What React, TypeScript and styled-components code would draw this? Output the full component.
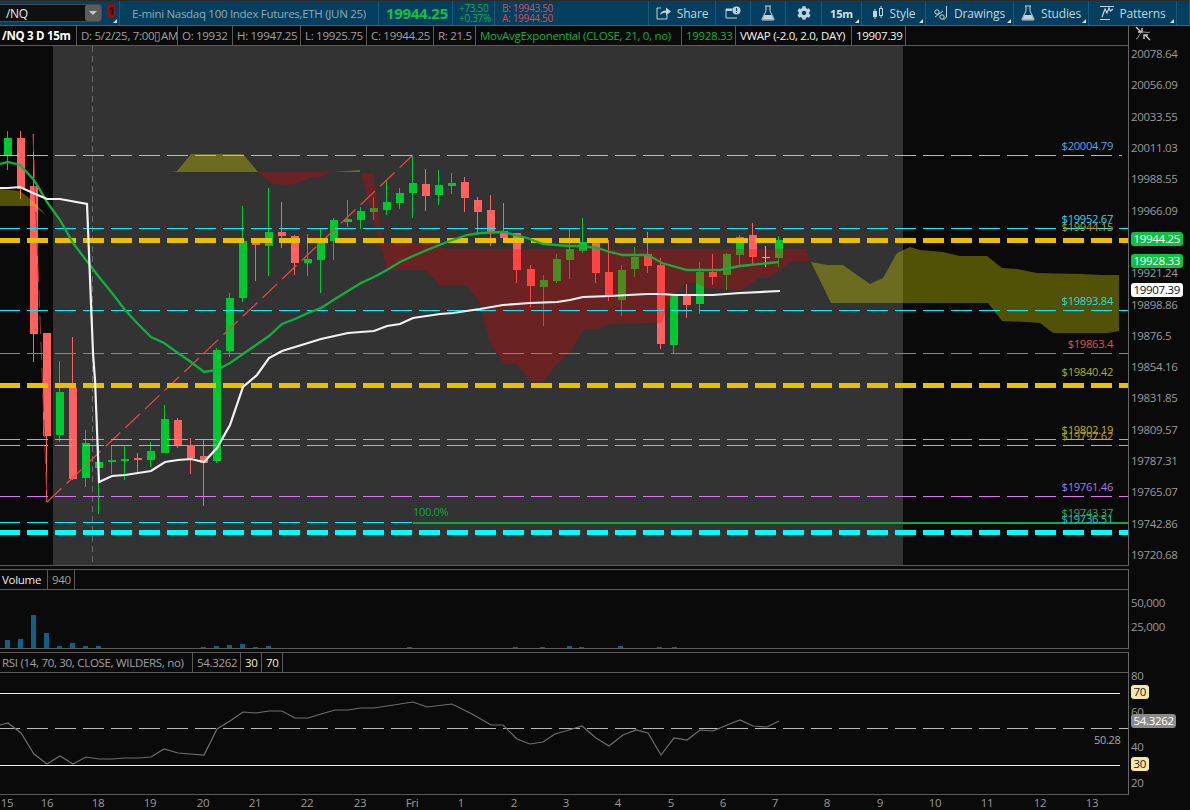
import styled, { createGlobalStyle } from "styled-components";
import { FaCog } from "react-icons/fa";

const GlobalStyle = createGlobalStyle`
  html, body { margin: 0; padding: 0; background: #0a0a0a; }
  body { font-family: "Open Sans", "Noto Sans", sans-serif; font-size: 11px; letter-spacing: -0.3px; overflow: hidden; }
`;

const Page = styled.div`
  width: 1190px;
  height: 810px;
  display: flex;
  flex-direction: column;
  overflow: hidden;
  background: #0a0a0a;
  color: #a0a0a0;
`;

const TopBar = styled.div`
  height: 24px;
  flex: none;
  display: flex;
  align-items: stretch;
  background: #053f5f;
  border-top: 1px solid #2a2a2a;
  border-bottom: 1px solid #5a5a5a;
`;

const Section = styled.div<{ $w?: number; $pad?: number }>`
  position: relative;
  width: ${(p) => (p.$w ? `${p.$w}px` : "auto")};
  flex: ${(p) => (p.$w ? "none" : "1")};
  box-sizing: border-box;
  display: flex;
  align-items: center;
  padding: 0 0 0 ${(p) => p.$pad ?? 7}px;
  border-right: 1px solid #17597c;
  white-space: nowrap;
`;

const SymbolBox = styled.div`
  width: 102px;
  height: 18px;
  margin: 3px 0 0 0;
  box-sizing: border-box;
  background: #101010;
  border: 1px solid #4a4a4a;
  border-left: none;
  border-radius: 0 3px 3px 0;
  display: flex;
  align-items: center;
  justify-content: space-between;
  color: #e8e8e8;
  font-size: 12px;
  padding-left: 6px;
`;

const DropButton = styled.div`
  width: 16px;
  height: 16px;
  background: #5c5c5c;
  border-radius: 2px;
  display: flex;
  align-items: center;
  justify-content: center;
  &::after {
    content: "";
    border-left: 4px solid transparent;
    border-right: 4px solid transparent;
    border-top: 4px solid #c8c8c8;
  }
`;

const AlertBadge = styled.div`
  width: 9px;
  height: 13px;
  margin: 3px 0 0 5px;
  border-radius: 2px;
  background: #8a1414;
  color: #2a0505;
  font-size: 11px;
  font-weight: 700;
  line-height: 13px;
  text-align: center;
`;

const Corner = styled.span`
  position: absolute;
  right: 2px;
  bottom: 2px;
  width: 0;
  height: 0;
  border-left: 4px solid transparent;
  border-bottom: 4px solid #d8e4ea;
`;

const SymbolSection = styled(Section)`
  padding: 0;
  align-items: flex-start;
`;

const Title = styled.span`
  color: #93a9b5;
  font-size: 11.5px;
  padding-left: 5px;
`;

const LastPrice = styled.span`
  color: #10c040;
  font-size: 15px;
  font-weight: 700;
`;

const TwoLines = styled.div<{ $color: string }>`
  display: flex;
  flex-direction: column;
  color: ${(p) => p.$color};
  font-size: 10px;
  line-height: 10px;
`;

const ToolButton = styled(Section)`
  justify-content: center;
  gap: 6px;
  padding: 0;
  color: #c4d3db;
  font-size: 12px;
  letter-spacing: -0.15px;
  svg { flex: none; }
`;

const BoldLabel = styled.span`
  font-weight: 700;
  font-size: 11px;
  color: #d4e0e6;
`;

const PaneRow = styled.div`
  display: flex;
  flex: none;
`;

const PaneMain = styled.div`
  width: 1129px;
  flex: none;
  box-sizing: border-box;
  border-right: 1px solid #666;
  border-bottom: 1px solid #5a5a5a;
`;

const SubPaneMain = styled(PaneMain)`
  border-top: 1px solid #5a5a5a;
`;

const Legend = styled.div`
  height: 19px;
  display: flex;
  border-bottom: 1px solid #5a5a5a;
  font-size: 11.5px;
`;

const LegendCell = styled.div<{ $w: number; $color?: string; $bold?: boolean; $pad?: number }>`
  width: ${(p) => p.$w}px;
  flex: none;
  box-sizing: border-box;
  padding-left: ${(p) => p.$pad ?? 4}px;
  line-height: 19px;
  border-right: 1px solid #5a5a5a;
  white-space: nowrap;
  overflow: hidden;
  color: ${(p) => p.$color || "#a0a0a0"};
  font-weight: ${(p) => (p.$bold ? 700 : 400)};
`;

const Plot = styled.div<{ $h: number }>`
  position: relative;
  height: ${(p) => p.$h}px;
  overflow: hidden;
  svg { display: block; }
`;

const PriceNote = styled.span.attrs<{ $y: number; $color: string }>((p) => ({
  style: { top: p.$y - 54, color: p.$color },
}))<{ $y: number; $color: string }>`
  position: absolute;
  right: 15px;
  line-height: 16px;
  font-size: 11.2px;
`;

const FibNote = styled.span`
  position: absolute;
  left: 413px;
  top: 458px;
  color: #12a544;
  line-height: 16px;
  font-size: 11px;
`;

const Axis = styled.div`
  position: relative;
  flex: 1;
  display: flex;
  flex-direction: column;
  padding-left: 2px;
  line-height: 16px;
  color: #9a9a9a;
  font-size: 11.5px;
`;

const PriceAxis = styled(Axis)`
  height: 540px;
  padding-bottom: 3px;
  box-sizing: border-box;
`;

const AxisIcon = styled.div`
  height: 20px;
  padding-left: 4px;
`;

const PriceScale = styled.div`
  flex: 1;
  display: flex;
  flex-direction: column;
  justify-content: space-between;
`;

const AxisLabel = styled.div`
  height: 16px;
`;

const VolumeScale = styled.div`
  display: flex;
  flex-direction: column;
  gap: 8px;
  padding-top: 26px;
`;

const RsiScale = styled.div`
  height: 123px;
  padding-top: 16px;
  display: flex;
  flex-direction: column;
  justify-content: space-between;
`;

const Badge = styled.div.attrs<{ $y: number; $bg: string; $fg: string }>((p) => ({
  style: { top: p.$y, background: p.$bg, color: p.$fg },
}))<{ $y: number; $bg: string; $fg: string }>`
  position: absolute;
  left: 2px;
  height: 14px;
  padding: 0 2.5px;
  line-height: 14px;
  border-radius: 3px;
  font-size: 11.5px;
`;

const Gap = styled.div`
  height: 3px;
  flex: none;
`;

const TimeAxis = styled.div`
  position: relative;
  height: 15px;
  flex: none;
  line-height: 16px;
  color: #9a9a9a;
  font-size: 11.5px;
`;

const Tick = styled.span.attrs<{ $x: number }>((p) => ({
  style: { left: p.$x },
}))<{ $x: number }>`
  position: absolute;
  top: 0;
  transform: translateX(-50%);
`;

const TinyNote = styled.span`
  position: absolute;
  left: 1094px;
  top: 59px;
  line-height: 16px;
  color: #a8a8a8;
  font-size: 11px;
`;

type Candle = [number, number, number, number, "g" | "r" | "p"];

// body top, body bottom, wick top, wick bottom, colour (pixels on the screen)
const candles: Candle[] = [
  [138, 156, 131, 170, "g"], [138, 189, 131, 199, "r"], [186, 334, 134, 362, "r"], [333, 436, 333, 502, "r"],
  [392, 435, 361, 442, "g"], [388, 479, 337, 480, "r"], [443, 478, 430, 487, "g"], [462, 468, 445, 514, "g"],
  [460, 462, 446, 474, "g"], [459, 461, 446, 480, "g"], [458, 460, 453, 472, "r"], [451, 460, 442, 467, "g"],
  [419, 453, 405, 453, "g"], [420, 445, 418, 448, "r"], [445, 458, 438, 474, "r"], [456, 463, 440, 506, "r"],
  [350, 461, 348, 463, "g"], [298, 351, 293, 357, "g"], [241, 298, 206, 302, "g"], [241, 245, 241, 281, "r"],
  [232, 246, 188, 276, "g"], [232, 236, 202, 248, "r"], [236, 263, 235, 275, "r"], [259, 263, 234, 276, "g"],
  [243, 260, 228, 293, "g"], [220, 241, 218, 260, "g"], [219, 222, 200, 227, "g"], [211, 220, 207, 229, "g"],
  [208, 212, 197, 220, "g"], [202, 210, 180, 215, "g"], [193, 203, 188, 209, "g"], [183, 193, 155, 218, "g"],
  [184, 196, 169, 211, "r"], [185, 195, 170, 205, "g"], [183, 186, 173, 194, "g"], [182, 198, 177, 212, "r"],
  [200, 212, 197, 235, "r"], [210, 232, 195, 246, "r"], [231, 238, 203, 238, "r"], [233, 270, 233, 283, "r"],
  [269, 286, 265, 307, "r"], [280, 287, 275, 326, "g"], [259, 281, 254, 283, "g"], [249, 260, 228, 279, "g"],
  [242, 251, 218, 253, "g"], [243, 273, 243, 283, "r"], [272, 297, 240, 301, "r"], [270, 300, 265, 316, "g"],
  [257, 269, 247, 277, "g"], [254, 266, 232, 273, "r"], [265, 344, 258, 349, "r"], [295, 345, 295, 353, "g"],
  [295, 305, 284, 318, "r"], [272, 304, 262, 314, "g"], [272, 277, 254, 285, "r"], [254, 275, 253, 290, "g"],
  [237, 255, 235, 266, "g"], [235, 257, 223, 266, "r"], [257, 258, 246, 267, "p"], [240, 258, 236, 267, "g"],
];

const candleX = (i: number) => Math.round(7.7 + 13.07 * i);

const pts = (list: number[][]) => list.map((p) => p.join(",")).join(" ");

const redCloud = [
  [361, 173], [373, 173], [383, 243], [430, 243], [447, 249], [806, 249], [810, 261], [792, 261], [768, 278],
  [758, 278], [742, 290], [705, 288], [697, 283], [686, 283], [672, 297], [661, 323], [610, 324], [598, 329],
  [583, 329], [572, 350], [557, 364], [544, 381], [530, 381], [517, 364], [505, 364], [492, 347], [479, 302],
  [466, 285], [439, 285], [426, 270], [387, 270],
];

const smallRedCloud = [[258, 172], [273, 184], [290, 185], [300, 182], [310, 178], [320, 177], [333, 172]];
const topOlive = [[171, 172], [177, 171], [191, 154], [243, 154], [258, 172]];
const sliverOlive = [[334, 172], [347, 171], [360, 170], [360, 172]];
const leftOlive = [[0, 189], [20, 191], [33, 201], [46, 215], [33, 206], [0, 206]];
const rightOlive = [
  [811, 262], [827, 265], [843, 265], [857, 275], [870, 284], [883, 278], [897, 253], [910, 247], [920, 250],
  [943, 252], [960, 256], [987, 256], [1002, 268], [1017, 269], [1037, 273], [1080, 274], [1103, 275], [1119, 275],
  [1119, 331], [1108, 333], [1053, 333], [1040, 323], [1027, 322], [1002, 321], [988, 303], [831, 303],
];

const maLine = [
  [0, 164], [8, 162], [20, 165], [34, 180], [47, 202], [60, 220], [73, 243], [86, 260], [99, 277], [112, 293],
  [125, 310], [138, 324], [151, 337], [164, 343], [178, 353], [191, 362], [204, 372], [217, 370], [230, 363],
  [243, 354], [256, 345], [269, 336], [282, 324], [295, 319], [308, 313], [321, 308], [335, 299], [348, 291],
  [361, 283], [374, 277], [387, 270], [400, 262], [413, 256], [427, 250], [447, 242], [467, 235], [480, 233],
  [503, 232], [527, 238], [543, 244], [570, 246], [583, 246], [597, 248], [610, 252], [623, 255], [648, 255],
  [662, 263], [687, 270], [720, 270], [740, 266], [779, 262],
];

const vwapLine = [
  [0, 188], [8, 188], [20, 187], [33, 193], [47, 199], [60, 199], [87, 204], [93, 353], [95, 380], [97, 430],
  [99, 482], [112, 476], [125, 475], [138, 473], [151, 471], [165, 462], [178, 460], [191, 459], [204, 462],
  [217, 448], [230, 425], [243, 387], [257, 375], [269, 358], [282, 351], [295, 347], [321, 339], [348, 333],
  [361, 332], [374, 331], [387, 326], [400, 324], [413, 318], [440, 314], [453, 313], [480, 309], [503, 305],
  [530, 303], [557, 302], [570, 300], [583, 297], [610, 296], [647, 294], [662, 294], [675, 295], [713, 295],
  [740, 293], [780, 291],
];

const rsiLine = [
  [0, 725], [8, 723], [21, 733], [34, 754], [47, 764], [60, 756], [73, 764], [86, 757], [99, 759], [112, 759],
  [125, 758], [138, 758], [151, 757], [164, 749], [178, 753], [204, 755], [217, 729], [230, 721], [243, 712],
  [256, 713], [269, 711], [282, 711], [295, 718], [308, 718], [321, 714], [335, 710], [348, 710], [361, 708],
  [374, 708], [400, 704], [413, 702], [427, 707], [452, 704], [472, 714], [491, 725], [503, 725], [517, 739],
  [530, 744], [543, 742], [555, 734], [569, 730], [582, 726], [596, 738], [609, 746], [623, 735], [636, 730],
  [648, 733], [661, 755], [674, 738], [687, 740], [700, 730], [713, 731], [727, 725], [740, 720], [753, 726],
  [767, 727], [779, 721],
];

const levels: [number, string, number][] = [
  [155.5, "#7ec8ee", 1], [228.5, "#00f0ff", 1], [240.5, "#e8c000", 5], [310.5, "#00f0ff", 1],
  [353.5, "#e06060", 1], [385.5, "#e8c000", 5], [439.5, "#d8b800", 1], [445.5, "#d8b800", 1],
  [496.5, "#d878f0", 1], [522.5, "#00f0ff", 1], [532.5, "#00ffff", 5],
];

const notes: [string, number, string][] = [
  ["$20004.79", 146, "#58a8e4"], ["$19944.15", 227, "#c09a10"], ["$19952.67", 219, "#20dcf0"],
  ["$19893.84", 301, "#20dcd8"], ["$19863.4", 344, "#e05050"], ["$19840.42", 372, "#b0b010"],
  ["$19797.62", 436, "#c0a010"], ["$19802.19", 430, "#c8a810"], ["$19761.46", 487, "#a878e8"],
  ["$19736.51", 519, "#10c8d8"], ["$19743.37", 513, "#10b860"],
];

const volumes: [number, number][] = [
  [8, 8], [21, 9], [34, 33], [47, 15], [60, 2], [73, 5], [86, 2], [99, 2], [204, 1], [217, 2], [230, 3], [243, 4],
  [256, 1], [269, 2], [410, 1], [516, 1], [543, 1], [570, 2], [582, 1], [621, 2], [660, 1], [675, 1],
];

const priceScale = [
  "20078.64", "20056.09", "20033.55", "20011.03", "19988.55", "19966.09", "", "19921.24", "19898.86", "19876.5",
  "19854.16", "19831.85", "19809.57", "19787.31", "19765.07", "19742.86", "19720.68",
];

const ticks: [string, number][] = [
  ["15", 7], ["16", 47], ["18", 98], ["19", 150], ["20", 203], ["21", 255], ["22", 307], ["23", 360], ["Fri", 412],
  ["1", 461], ["2", 514], ["3", 566], ["4", 618], ["5", 671], ["6", 723], ["7", 775], ["8", 827], ["9", 880],
  ["10", 935], ["11", 987], ["12", 1040], ["13", 1092],
];

const CandleSet = ({ up, down }: { up: string; down: string }) => (
  <g shapeRendering="crispEdges">
    {candles.map(([t, b, wt, wb, c], i) => {
      const x = candleX(i);
      const fill = c === "g" ? up : c === "r" ? down : "#e6a4a4";
      return (
        <g key={i} fill={fill}>
          <rect x={x - 1} y={wt} width={1} height={wb - wt} />
          <rect x={x - 4} y={t} width={8} height={b - t} />
        </g>
      );
    })}
  </g>
);

const PriceChart = () => (
  <svg width={1128} height={519} viewBox="0 46 1128 519">
    <defs>
      <clipPath id="cloud-clip">
        <polygon points={pts(redCloud)} />
      </clipPath>
    </defs>
    <rect x={53} y={46} width={850} height={519} fill="#333333" />
    <line x1={92.5} y1={46} x2={92.5} y2={565} stroke="#6a6a6a" strokeDasharray="6 4" shapeRendering="crispEdges" />
    <polygon points={pts(redCloud)} fill="rgba(203,5,5,.37)" />
    <polygon points={pts(smallRedCloud)} fill="rgba(203,5,5,.37)" />
    <polygon points={pts(topOlive)} fill="rgba(205,205,0,.37)" />
    <polygon points={pts(sliverOlive)} fill="rgba(205,205,0,.37)" />
    <polygon points={pts(rightOlive)} fill="rgba(205,205,0,.37)" />
    <CandleSet up="#00c832" down="#ff6060" />
    <g clipPath="url(#cloud-clip)">
      <CandleSet up="#4b8b1f" down="#ff4444" />
    </g>
    <polygon points={pts(leftOlive)} fill="rgba(205,205,0,.37)" />
    <line x1={33} y1={134} x2={47} y2={502} stroke="#a83030" strokeDasharray="18 8" />
    <line x1={72} y1={235.5} x2={93} y2={235.5} stroke="#6b2020" />
    <line x1={47} y1={502} x2={413} y2={155} stroke="#e04848" strokeWidth={1.3} strokeDasharray="20 7" />
    {levels.map(([y, color, w]) => (
      <line
        key={y}
        x1={0}
        y1={y}
        x2={y === 155.5 ? 1122 : 1128}
        y2={y}
        stroke={color}
        strokeWidth={w}
        strokeDasharray="21 7"
        strokeDashoffset={1.3}
        shapeRendering="crispEdges"
      />
    ))}
    <line x1={413} y1={523} x2={1128} y2={523} stroke="#10a844" strokeWidth={2} shapeRendering="crispEdges" />
    <polyline points={pts(maLine)} fill="none" stroke="#10b040" strokeWidth={2.3} />
    <polyline points={pts(vwapLine)} fill="none" stroke="#f2f2f2" strokeWidth={2.2} />
  </svg>
);

const VolumeBars = () => (
  <svg width={1128} height={58} viewBox="0 590 1128 58">
    {volumes.map(([x, h]) => (
      <rect key={x} x={x - 3} y={648 - h} width={5} height={h} fill="#0e5f8a" shapeRendering="crispEdges" />
    ))}
  </svg>
);

const RsiChart = () => (
  <svg width={1128} height={121} viewBox="0 673 1128 121">
    <line x1={0} y1={693.5} x2={1120} y2={693.5} stroke="#f4eeb4" shapeRendering="crispEdges" />
    <line x1={0} y1={765.5} x2={1120} y2={765.5} stroke="#f4eeb4" shapeRendering="crispEdges" />
    <line
      x1={0}
      y1={728.5}
      x2={1128}
      y2={728.5}
      stroke="#b8b8b8"
      strokeDasharray="21 7"
      strokeDashoffset={1.3}
      shapeRendering="crispEdges"
    />
    <polyline points={pts(rsiLine)} fill="none" stroke="#6e6e6e" strokeWidth={1.2} />
  </svg>
);

const ShareIcon = () => (
  <svg width="15" height="14" viewBox="0 0 15 14" fill="none">
    <path d="M5 2H1v11h10V9" stroke="#c4d3db" />
    <path d="M4 9c.4-3 2.800-4.600 6-4.600V1.500L15 5.500 10 9.500V6.800C7.500 6.800 5.500 7.400 4 9z" fill="#c4d3db" />
  </svg>
);

const NoteIcon = () => (
  <svg width="16" height="14" viewBox="0 0 16 14" fill="none">
    <path d="M12 12H1V3h8" stroke="#c4d3db" />
    <path d="M1 3h6v2H1z" fill="#c4d3db" />
    <circle cx="11.500" cy="4.500" r="4" fill="#c4d3db" />
    <path d="M11.500 2v3M11.500 6v1" stroke="#053f5f" strokeWidth="1.200" />
  </svg>
);

const FlaskIcon = ({ size = 16 }: { size?: number }) => (
  <svg width={size - 2} height={size} viewBox="0 0 14 16" fill="none">
    <path d="M4 1h6M5 1v5L1 14c-.3.600 0 1 .6 1h10.800c.6 0 .9-.4.600-1L9 6V1" stroke="#c4d3db" />
    <path d="M3.400 10h7.200l2 4.500H1.500z" fill="#c4d3db" />
  </svg>
);

const CandlesIcon = () => (
  <svg width="12" height="16" viewBox="0 0 12 16" fill="none">
    <path d="M3 4v10M9 1v12" stroke="#c4d3db" />
    <rect x="1" y="6" width="4" height="6" fill="#c4d3db" />
    <rect x="7.500" y="3.500" width="3" height="7" stroke="#c4d3db" fill="#053f5f" />
  </svg>
);

const DrawingsIcon = () => (
  <svg width="14" height="16" viewBox="0 0 14 16" fill="none">
    <circle cx="3" cy="7" r="2.200" stroke="#c4d3db" />
    <circle cx="8" cy="12" r="2.200" stroke="#c4d3db" />
    <path d="M1 12L9 6M12.500 1v11L9.500 15" stroke="#c4d3db" />
  </svg>
);

const PatternsIcon = () => (
  <svg width="14" height="16" viewBox="0 0 14 16" fill="none">
    <path d="M0 1.500h14M0 14.500h10" stroke="#c4d3db" />
    <path d="M2 12L5 4l2 4 2-5 1.500 3L13 4" stroke="#c4d3db" strokeWidth="1.200" />
  </svg>
);

const CollapseIcon = () => (
  <svg width="16" height="15" viewBox="0 0 16 15" fill="none">
    <path d="M1 1l5 5M3 6h4V2" stroke="#c8c8c8" strokeWidth="1.400" />
    <path d="M15 14l-5-5M13 9H9v4" stroke="#c8c8c8" strokeWidth="1.400" />
    <path d="M1 13c3 0 3-7 7-7s4 1 7 0" stroke="#9a9a9a" />
  </svg>
);

const App = () => (
  <Page>
    <GlobalStyle />
    <TopBar>
      <SymbolSection $w={120}>
        <SymbolBox>
          /NQ
          <DropButton />
        </SymbolBox>
        <AlertBadge>1</AlertBadge>
        <Corner />
      </SymbolSection>
      <Section $w={259}>
        <Title>E-mini Nasdaq 100 Index Futures,ETH (JUN 25)</Title>
      </Section>
      <Section $w={74}>
        <LastPrice>19944.25</LastPrice>
      </Section>
      <Section $w={42} $pad={6}>
        <TwoLines $color="#12b048">
          <span>+73.50</span>
          <span>+0.37%</span>
        </TwoLines>
      </Section>
      <Section>
        <TwoLines $color="#d84c4c">
          <span>B: 19943.50</span>
          <span>A: 19944.50</span>
        </TwoLines>
      </Section>
      <ToolButton $w={67}>
        <ShareIcon />
        Share
      </ToolButton>
      <ToolButton $w={35}>
        <NoteIcon />
      </ToolButton>
      <ToolButton $w={35}>
        <FlaskIcon />
      </ToolButton>
      <ToolButton $w={36}>
        <FaCog size={14} color="#c4d3db" />
      </ToolButton>
      <ToolButton $w={40}>
        <BoldLabel>15m</BoldLabel>
        <Corner />
      </ToolButton>
      <ToolButton $w={64}>
        <CandlesIcon />
        Style
        <Corner />
      </ToolButton>
      <ToolButton $w={88}>
        <DrawingsIcon />
        Drawings
        <Corner />
      </ToolButton>
      <ToolButton $w={75}>
        <FlaskIcon />
        Studies
        <Corner />
      </ToolButton>
      <ToolButton $w={88}>
        <PatternsIcon />
        Patterns
        <Corner />
      </ToolButton>
      <ToolButton $w={13} />
    </TopBar>

    <PaneRow>
      <PaneMain>
        <Legend>
          <LegendCell $w={77} $color="#ffffff" $bold $pad={2}>
            /NQ 3 D 15m
          </LegendCell>
          <LegendCell $w={101}>D: 5/2/25, 7:00▯AM</LegendCell>
          <LegendCell $w={55}>O: 19932</LegendCell>
          <LegendCell $w={68}>H: 19947.25</LegendCell>
          <LegendCell $w={66}>L: 19925.75</LegendCell>
          <LegendCell $w={67}>C: 19944.25</LegendCell>
          <LegendCell $w={42}>R: 21.5</LegendCell>
          <LegendCell $w={206} $color="#12b040">
            MovAvgExponential (CLOSE, 21, 0, no)
          </LegendCell>
          <LegendCell $w={54} $color="#12b040">
            19928.33
          </LegendCell>
          <LegendCell $w={116} $color="#f2f2f2">
            VWAP (-2.0, 2.0, DAY)
          </LegendCell>
          <LegendCell $w={54} $color="#f2f2f2">
            19907.39
          </LegendCell>
        </Legend>
        <Plot $h={519}>
          <PriceChart />
          {notes.map(([label, y, color]) => (
            <PriceNote key={label} $y={y} $color={color}>
              {label}
            </PriceNote>
          ))}
          <FibNote>100.0%</FibNote>
        </Plot>
      </PaneMain>
      <PriceAxis>
        <AxisIcon>
          <CollapseIcon />
        </AxisIcon>
        <PriceScale>
          {priceScale.map((label, i) => (
            <AxisLabel key={i}>{label}</AxisLabel>
          ))}
        </PriceScale>
        <Badge $y={206} $bg="#10c040" $fg="#ffffff">
          19944.25
        </Badge>
        <Badge $y={228} $bg="#10c040" $fg="#ffffff">
          19928.33
        </Badge>
        <Badge $y={257} $bg="#ffffff" $fg="#111111">
          19907.39
        </Badge>
      </PriceAxis>
    </PaneRow>
    <Gap />
    <PaneRow>
      <SubPaneMain>
        <Legend>
          <LegendCell $w={48} $color="#e8e8e8" $pad={2}>
            Volume
          </LegendCell>
          <LegendCell $w={27}>940</LegendCell>
        </Legend>
        <Plot $h={58}>
          <VolumeBars />
        </Plot>
      </SubPaneMain>
      <Axis>
        <VolumeScale>
          <AxisLabel>50,000</AxisLabel>
          <AxisLabel>25,000</AxisLabel>
        </VolumeScale>
      </Axis>
    </PaneRow>
    <Gap />
    <PaneRow>
      <SubPaneMain>
        <Legend>
          <LegendCell $w={193} $pad={2}>
            RSI (14, 70, 30, CLOSE, WILDERS, no)
          </LegendCell>
          <LegendCell $w={48}>54.3262</LegendCell>
          <LegendCell $w={21} $color="#f4eeb4">
            30
          </LegendCell>
          <LegendCell $w={21} $color="#f4eeb4">
            70
          </LegendCell>
        </Legend>
        <Plot $h={121}>
          <RsiChart />
          <TinyNote>50.28</TinyNote>
        </Plot>
      </SubPaneMain>
      <Axis>
        <RsiScale>
          <AxisLabel>80</AxisLabel>
          <AxisLabel>60</AxisLabel>
          <AxisLabel>40</AxisLabel>
          <AxisLabel>20</AxisLabel>
        </RsiScale>
        <Badge $y={33} $bg="#f4e8a8" $fg="#222222">
          70
        </Badge>
        <Badge $y={62} $bg="#8a8a8a" $fg="#ffffff">
          54.3262
        </Badge>
        <Badge $y={105} $bg="#f4e8a8" $fg="#222222">
          30
        </Badge>
      </Axis>
    </PaneRow>
    <TimeAxis>
      {ticks.map(([label, x]) => (
        <Tick key={label} $x={x}>
          {label}
        </Tick>
      ))}
    </TimeAxis>
  </Page>
);

export default App;
